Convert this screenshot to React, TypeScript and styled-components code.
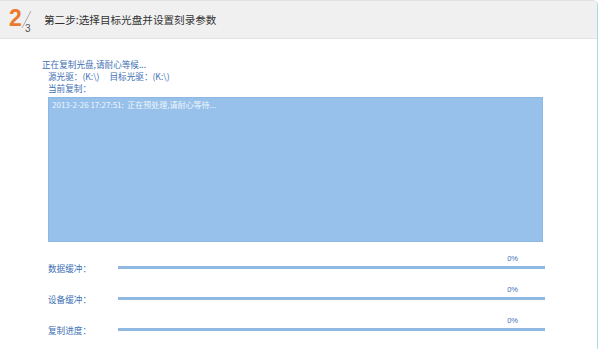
import React from 'react';
import styled, { createGlobalStyle } from 'styled-components';

const GlobalStyle = createGlobalStyle`
    html, body {
        margin: 0;
        padding: 0;
        background: #ffffff;
    }
    body {
        font-family: "Noto Sans CJK SC", "Liberation Sans", sans-serif;
    }
`;

const Frame = styled.div`
    width: 597px;
    height: 348px;
    border-top: 1px solid #e2e2e2;
    border-right: 1px solid #aadbe3;
    border-top-right-radius: 5px;
    overflow: hidden;
    background: #fff;
`;

const Header = styled.div`
    height: 37px;
    background: #f0f0f0;
    border-bottom: 1px solid #e4e4e4;
    display: flex;
    align-items: center;
    padding-left: 9px;
`;

const StepMark = styled.div`
    position: relative;
    width: 30px;
    height: 30px;
    margin-top: 2px;
`;

const BigNum = styled.span`
    font-family: "Liberation Sans", Arial, sans-serif;
    font-weight: bold;
    font-size: 23px;
    line-height: 24px;
    color: #ec7a2c;
    display: block;
`;

const Slash = styled.svg`
    position: absolute;
    left: 12px;
    top: 4px;
`;

const SmallNum = styled.span`
    position: absolute;
    left: 16px;
    top: 17px;
    font-family: "Liberation Sans", Arial, sans-serif;
    font-size: 10px;
    color: #555;
`;

const Title = styled.h1`
    margin: 0 0 0 5px;
    font-size: 10.6px;
    font-weight: normal;
    color: #333;
`;

const Body = styled.div`
    padding: 19px 0 0 42px;
    color: #3d6fb4;
    font-size: 8.6px;
`;

const Line = styled.div<{ $indent?: boolean }>`
    height: 12px;
    line-height: 12px;
    padding-left: ${p => (p.$indent ? 6 : 0)}px;
    white-space: nowrap;
`;

const Drive = styled.span`
    margin-right: 10px;
`;

const LogBox = styled.div`
    margin: 3px 0 0 6px;
    width: 495px;
    height: 145px;
    background: #97c1ea;
    border: 1px solid #8db8e2;
    box-sizing: border-box;
    padding: 1px 3px;
    color: #eef5fd;
    font-size: 8px;
    line-height: 12px;
`;

const Meters = styled.div`
    margin: 12px 0 0 6px;
    display: flex;
    flex-direction: column;
    gap: 15px;
`;

const Meter = styled.div`
    display: grid;
    grid-template-columns: 70px 427px;
    grid-template-rows: 10px 6px;
    align-items: center;
`;

const Percent = styled.span`
    grid-column: 2;
    grid-row: 1;
    justify-self: end;
    padding-right: 27px;
    font-family: "Liberation Sans", Arial, sans-serif;
    font-size: 7.5px;
    line-height: 10px;
`;

const MeterLabel = styled.span`
    grid-column: 1;
    grid-row: 2;
    line-height: 6px;
    margin-top: 2px;
`;

const Track = styled.div`
    grid-column: 2;
    grid-row: 2;
    height: 3px;
    background: #8fb9e2;
`;

const Fill = styled.div`
    height: 100%;
    background: #3d6fb4;
`;

const meters = [
    { label: '数据缓冲：', value: 0 },
    { label: '设备缓冲：', value: 0 },
    { label: '复制进度：', value: 0 },
];

export default function App() {
    return (
        <>
            <GlobalStyle />
            <Frame>
                <Header>
                    <StepMark>
                        <BigNum>2</BigNum>
                        <Slash width="11" height="19" viewBox="0 0 11 19">
                            <line x1="1" y1="18" x2="10" y2="1" stroke="#9a9a9a" strokeWidth="0.8" />
                        </Slash>
                        <SmallNum>3</SmallNum>
                    </StepMark>
                    <Title>第二步:选择目标光盘并设置刻录参数</Title>
                </Header>
                <Body>
                    <Line>正在复制光盘,请耐心等候...</Line>
                    <Line $indent>
                        <Drive>源光驱：(K:\)</Drive>
                        目标光驱：(K:\)
                    </Line>
                    <Line $indent>当前复制：</Line>
                    <LogBox>2013-2-26 17:27:51:&nbsp; 正在预处理,请耐心等待...</LogBox>
                    <Meters>
                        {meters.map(m => (
                            <Meter key={m.label}>
                                <Percent>{m.value}%</Percent>
                                <MeterLabel>{m.label}</MeterLabel>
                                <Track>
                                    <Fill style={{ width: `${m.value}%` }} />
                                </Track>
                            </Meter>
                        ))}
                    </Meters>
                </Body>
            </Frame>
        </>
    );
}
